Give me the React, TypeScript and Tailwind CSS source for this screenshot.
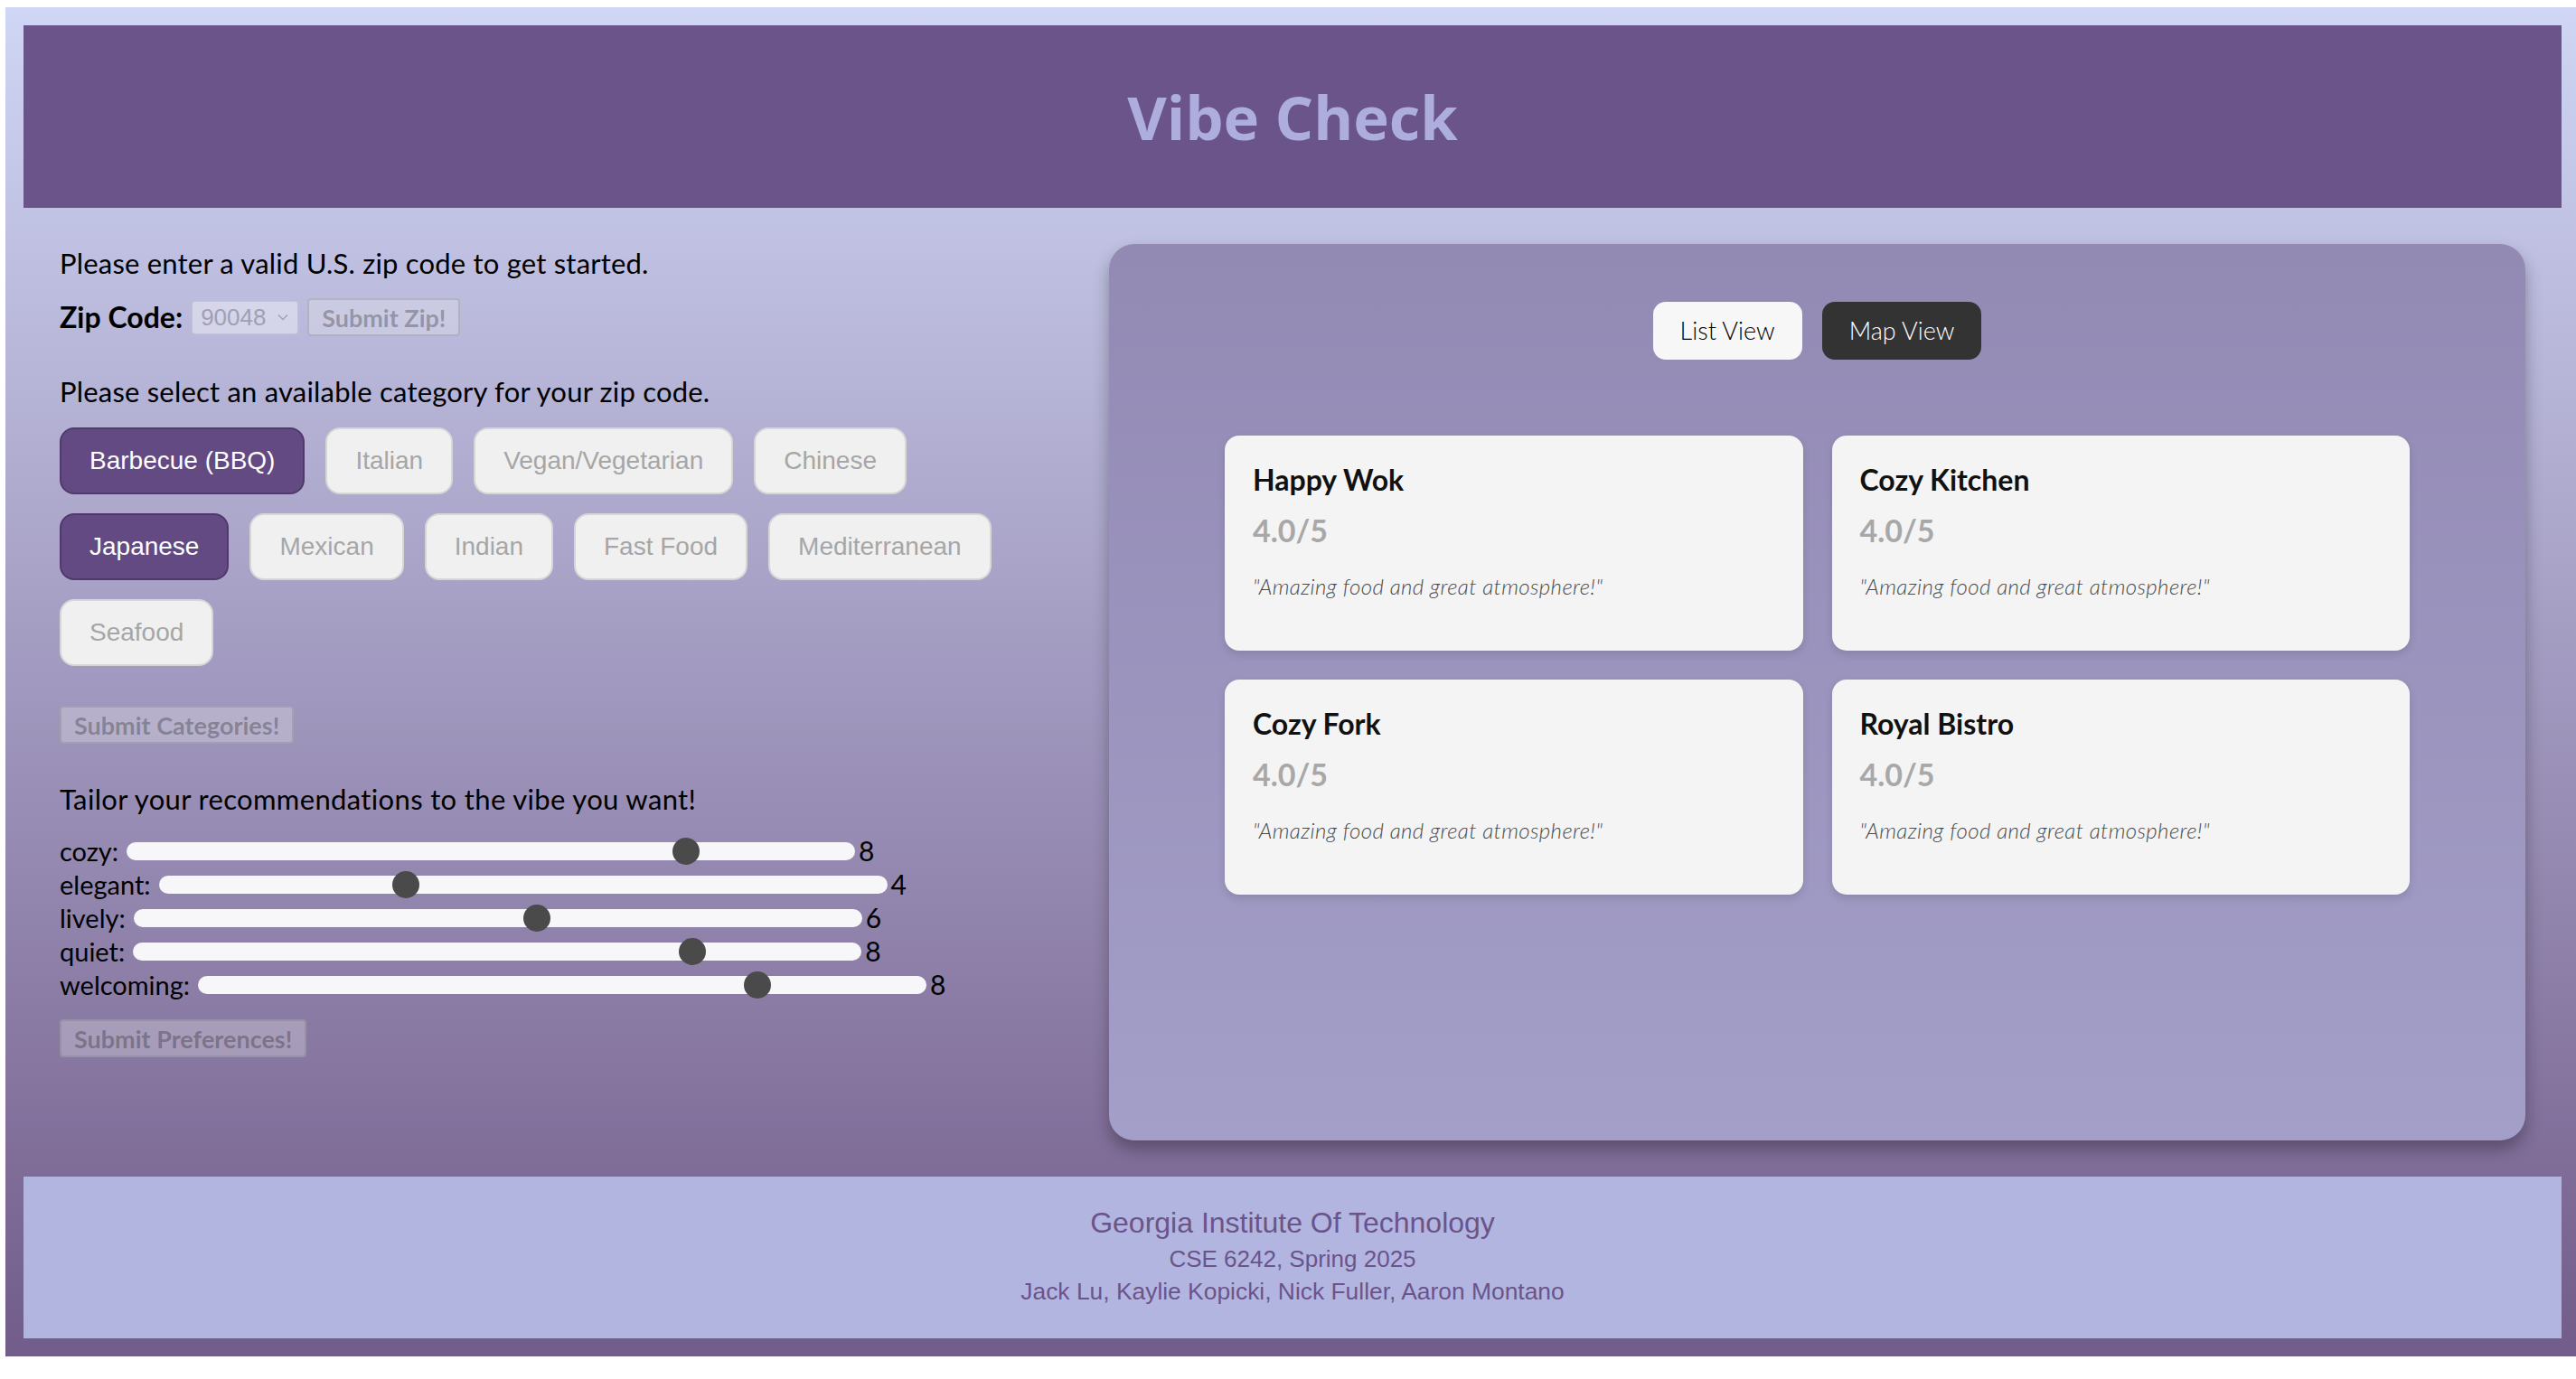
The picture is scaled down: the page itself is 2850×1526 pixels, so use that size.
import React from 'react';

// categories for the selected zip code
const categories = [
  { name: 'Barbecue (BBQ)', selected: true },
  { name: 'Italian', selected: false },
  { name: 'Vegan/Vegetarian', selected: false },
  { name: 'Chinese', selected: false },
  { name: 'Japanese', selected: true },
  { name: 'Mexican', selected: false },
  { name: 'Indian', selected: false },
  { name: 'Fast Food', selected: false },
  { name: 'Mediterranean', selected: false },
  { name: 'Seafood', selected: false },
];

const vibes = [
  { name: 'cozy', value: 8 },
  { name: 'elegant', value: 4 },
  { name: 'lively', value: 6 },
  { name: 'quiet', value: 8 },
  { name: 'welcoming', value: 8 },
];

const restaurants = ['Happy Wok', 'Cozy Kitchen', 'Cozy Fork', 'Royal Bistro'];

const TRACK_WIDTH = 806;
const THUMB = 30;

function DisabledButton({ label, className = '' }: { label: string; className?: string }) {
  return (
    <button
      disabled
      className={`h-[42px] px-[14px] border-2 border-[rgba(118,118,118,0.3)] rounded-[4px] bg-[rgba(239,239,239,0.3)] text-[27px] font-bold leading-none text-[rgba(16,16,16,0.3)] ${className}`}
    >
      {label}
    </button>
  );
}

function VibeSlider({ name, value }: { name: string; value: number }) {
  const left = ((value - 1) / 9) * (TRACK_WIDTH - THUMB);
  return (
    <div className="flex items-center h-[37px] text-[29px] leading-[37px]">
      <span>{name}:</span>
      <div className="relative ml-[9px] w-[806px] h-[20px] rounded-full bg-[#f7f6f8]">
        <div
          className="absolute top-[-5px] w-[30px] h-[30px] rounded-full bg-[#4a4a4a]"
          style={{ left: `${left}px` }}
        />
      </div>
      <span className="ml-[4px] text-[30px]">{value}</span>
    </div>
  );
}

function RestaurantCard({ name }: { name: string }) {
  return (
    <div className="h-[238px] rounded-[16px] bg-[#f4f4f4] pt-[30px] px-[31px] shadow-[0_4px_10px_rgba(0,0,0,0.12)]">
      <h3 className="text-[32px] leading-[38px] font-bold text-[#111]">{name}</h3>
      <div className="mt-[16px] text-[34px] leading-[42px] font-bold text-[#a8a8a8]">4.0/5</div>
      <p className="mt-[26px] text-[24px] leading-[29px] tracking-[0.4px] italic font-light text-[#4a4a4a]">
        "Amazing food and great atmosphere!"
      </p>
    </div>
  );
}

export default function App() {
  return (
    <div className="w-[2850px] h-[1526px] bg-white pt-[8px] pl-[6px] overflow-hidden font-[family-name:Lato,sans-serif] text-black">
      <div className="w-[2844px] h-[1493px] bg-[linear-gradient(to_bottom,#d0d6f5,#725c89)] pt-[20px] pl-[20px]">
        {/* header */}
        <header className="w-[2808px] h-[202px] bg-[#6a5489] flex items-center justify-center">
          <h1 className="text-[67px] leading-none font-bold text-[#adaedd] font-[family-name:'Open_Sans',sans-serif]">
            Vibe Check
          </h1>
        </header>

        <main className="w-[2808px] flex gap-[40px] p-[40px]">
          {/* left column: inputs */}
          <section className="w-[1121px]">
            <p className="mt-[3px] text-[31px] leading-[36px] tracking-[0.2px]">
              Please enter a valid U.S. zip code to get started.
            </p>

            <div className="mt-[21px] flex items-center h-[42px]">
              <span className="text-[32px] font-bold mr-[10px]">Zip Code:</span>
              <div className="w-[118px] h-[37px] flex items-center justify-between pl-[9px] pr-[10px] border border-[rgba(118,118,118,0.2)] rounded-[4px] bg-[rgba(255,255,255,0.4)] text-[26px] text-[#a09fb5] font-[family-name:'Liberation_Sans',Arial,sans-serif]">
                <span>90048</span>
                <svg width="12" height="8" viewBox="0 0 12 8" fill="none">
                  <path d="M1 1.5 L6 6.5 L11 1.5" stroke="#a09fb5" strokeWidth="1.3" />
                </svg>
              </div>
              <DisabledButton label="Submit Zip!" className="ml-[10px]" />
            </div>

            <p className="mt-[43px] text-[31px] leading-[36px] tracking-[0.2px]">
              Please select an available category for your zip code.
            </p>

            <div className="mt-[22px] flex flex-wrap gap-x-[23px] gap-y-[21px]">
              {categories.map((c) => (
                <button
                  key={c.name}
                  className={`h-[74px] px-[31px] rounded-[16px] border-2 text-[28px] font-[family-name:'Liberation_Sans',Arial,sans-serif] ${
                    c.selected
                      ? 'bg-[#634a82] border-[#4f3a6b] text-white'
                      : 'bg-[#f0f0f0] border-[#d6d6d6] text-[#a6a6a6]'
                  }`}
                >
                  {c.name}
                </button>
              ))}
            </div>

            <DisabledButton label="Submit Categories!" className="mt-[44px]" />

            <p className="mt-[43px] text-[31px] leading-[36px] tracking-[0.35px]">
              Tailor your recommendations to the vibe you want!
            </p>

            <div className="mt-[21px] flex flex-col">
              {vibes.map((v) => (
                <VibeSlider key={v.name} name={v.name} value={v.value} />
              ))}
            </div>

            <DisabledButton label="Submit Preferences!" className="mt-[20px]" />
          </section>

          {/* right panel: results */}
          <section className="w-[1567px] h-[992px] rounded-[28px] bg-[linear-gradient(to_bottom,#938ab4,#a39fc8)] shadow-[0_10px_18px_rgba(0,0,0,0.3)] pt-[64px]">
            <div className="flex justify-center gap-[22px]">
              <button className="h-[64px] px-[30px] rounded-[14px] bg-[#f8f7f8] text-[27px] font-light text-black">
                List View
              </button>
              <button className="h-[64px] px-[30px] rounded-[14px] bg-[#333333] text-[27px] font-light text-white">
                Map View
              </button>
            </div>

            <div className="mt-[84px] mx-auto w-[1311px] grid grid-cols-2 gap-[32px]">
              {restaurants.map((r) => (
                <RestaurantCard key={r} name={r} />
              ))}
            </div>
          </section>
        </main>

        {/* footer */}
        <footer className="w-[2808px] h-[179px] bg-[#b3b5e1] pt-[33px] text-center text-[#6a5489] font-[family-name:'Liberation_Sans',Arial,sans-serif]">
          <div className="text-[32px] leading-[37px]">Georgia Institute Of Technology</div>
          <div className="mt-[6px] text-[26px] leading-[30px]">CSE 6242, Spring 2025</div>
          <div className="mt-[6px] text-[26.4px] leading-[30px]">Jack Lu, Kaylie Kopicki, Nick Fuller, Aaron Montano</div>
        </footer>
      </div>
    </div>
  );
}
